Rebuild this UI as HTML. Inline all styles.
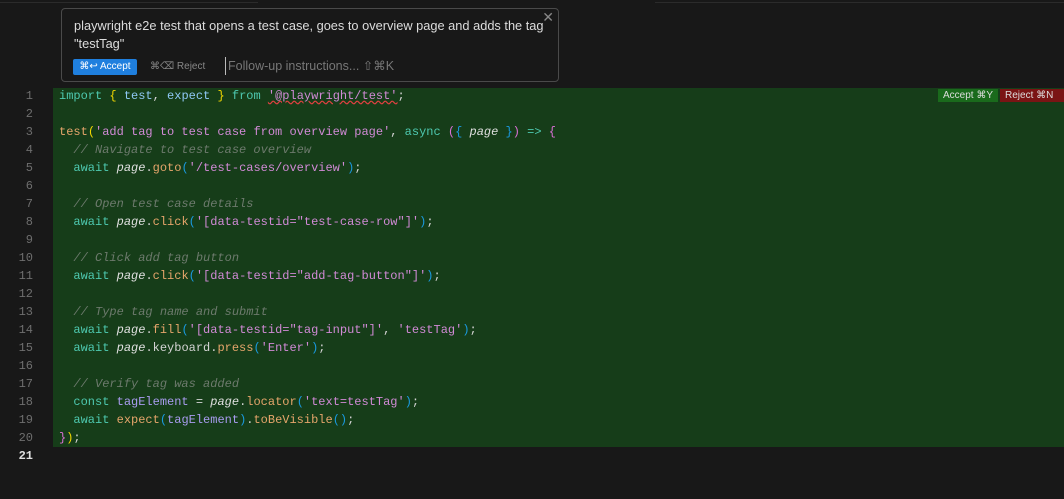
<!DOCTYPE html>
<html><head><style>
body{margin:0;width:1064px;height:499px;background:#181818;overflow:hidden;position:relative;font-family:"Liberation Sans",sans-serif}
.top{position:absolute;left:0;top:0;width:258px;height:2px;border-bottom:1px solid #2b2b2b}
.top2{position:absolute;left:655px;top:0;width:409px;height:2px;border-bottom:1px solid #2b2b2b}
.box{position:absolute;left:61px;top:8px;width:496px;height:72px;border:1px solid #4a4a4a;border-radius:4px;background:#181818}
.box .t{position:absolute;left:12px;top:8px;font-size:12.8px;line-height:18px;color:#dcdcdc;width:482px}
.x{position:absolute;right:4px;top:0px;color:#888;font-size:14px}
.acc{position:absolute;left:11px;top:50px;width:64px;height:16px;background:#1f7fde;color:#fff;font-size:10px;line-height:16px;text-align:center;border-radius:2px}
.rej{position:absolute;left:88px;top:50px;color:#888;font-size:10px;line-height:16px}
.fu{position:absolute;left:163px;top:48px;color:#777;font-size:12.5px;line-height:18px;border-left:1px solid #bbb;padding-left:2px}
.green{position:absolute;left:53px;top:88px;width:1011px;height:359px;background:#163d19}
.code{position:absolute;left:0;top:87px;font-family:"Liberation Mono",monospace;font-size:12px;line-height:18px;white-space:pre;color:#d4d4d4}
.ln{display:inline-block;width:33px;text-align:right;color:#6e6e6e;margin-right:26px}
.k{color:#4ec9b0}.s{color:#d18ad6}.f{color:#e5a56b}.v{color:#a99cf0}.lb{color:#8fc8f5}.c{color:#6d7a6d;font-style:italic}.y{color:#f1d700}.b{color:#1a9ae0}.p{color:#da70d6}.i{font-style:italic;color:#e0e0e0}
.ar{position:absolute;top:89px;height:13px;font-size:10px;line-height:13px;color:#ddd;padding:0 5px}
</style></head><body>
<div class="top"></div><div class="top2"></div>
<div class="green"></div>
<div class="ar" style="left:938px;background:#1a6a1c">Accept ⌘Y</div>
<div class="ar" style="left:1000px;background:#7a1414;width:54px">Reject ⌘N</div>
<div class="code"><span class="ln">1</span><span class="k">import</span> <span class="y">{</span> <span class="lb">test</span>, <span class="lb">expect</span> <span class="y">}</span> <span class="k">from</span> <span class="s" style="text-decoration:underline wavy #e04040">'@playwright/test'</span>;
<span class="ln">2</span>
<span class="ln">3</span><span class="f">test</span><span class="y">(</span><span class="s">'add tag to test case from overview page'</span>, <span class="k">async</span> <span class="p">(</span><span class="b">{</span> <span class="i">page</span> <span class="b">}</span><span class="p">)</span> <span class="k">=&gt;</span> <span class="p">{</span>
<span class="ln">4</span>  <span class="c">// Navigate to test case overview</span>
<span class="ln">5</span>  <span class="k">await</span> <span class="i">page</span>.<span class="f">goto</span><span class="b">(</span><span class="s">'/test-cases/overview'</span><span class="b">)</span>;
<span class="ln">6</span>
<span class="ln">7</span>  <span class="c">// Open test case details</span>
<span class="ln">8</span>  <span class="k">await</span> <span class="i">page</span>.<span class="f">click</span><span class="b">(</span><span class="s">'[data-testid="test-case-row"]'</span><span class="b">)</span>;
<span class="ln">9</span>
<span class="ln">10</span>  <span class="c">// Click add tag button</span>
<span class="ln">11</span>  <span class="k">await</span> <span class="i">page</span>.<span class="f">click</span><span class="b">(</span><span class="s">'[data-testid="add-tag-button"]'</span><span class="b">)</span>;
<span class="ln">12</span>
<span class="ln">13</span>  <span class="c">// Type tag name and submit</span>
<span class="ln">14</span>  <span class="k">await</span> <span class="i">page</span>.<span class="f">fill</span><span class="b">(</span><span class="s">'[data-testid="tag-input"]'</span>, <span class="s">'testTag'</span><span class="b">)</span>;
<span class="ln">15</span>  <span class="k">await</span> <span class="i">page</span>.keyboard.<span class="f">press</span><span class="b">(</span><span class="s">'Enter'</span><span class="b">)</span>;
<span class="ln">16</span>
<span class="ln">17</span>  <span class="c">// Verify tag was added</span>
<span class="ln">18</span>  <span class="k">const</span> <span class="v">tagElement</span> = <span class="i">page</span>.<span class="f">locator</span><span class="b">(</span><span class="s">'text=testTag'</span><span class="b">)</span>;
<span class="ln">19</span>  <span class="k">await</span> <span class="f">expect</span><span class="b">(</span><span class="v">tagElement</span><span class="b">)</span>.<span class="f">toBeVisible</span><span class="b">()</span>;
<span class="ln">20</span><span class="p">}</span><span class="y">)</span>;
<span class="ln" style="color:#e0e0e0;font-weight:bold">21</span></div>
<div class="box">
<div class="t">playwright e2e test that opens a test case, goes to overview page and adds the tag "testTag"</div>
<div class="x">✕</div>
<div class="acc">⌘↩ Accept</div>
<div class="rej">⌘⌫ Reject</div>
<div class="fu">Follow-up instructions... ⇧⌘K</div>
</div>
</body></html>
